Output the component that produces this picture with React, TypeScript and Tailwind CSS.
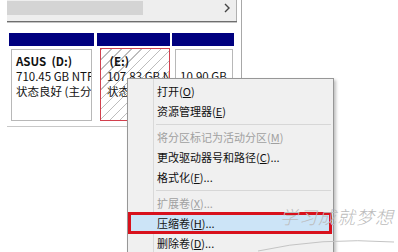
import React from "react";

const font = '"Noto Sans CJK SC", "Noto Sans", sans-serif';

function Item({ label, k, tail = "", disabled = false }: { label: string; k: string; tail?: string; disabled?: boolean }) {
  return (
    <div className={`h-[20px] leading-[20px] pl-[29px] whitespace-nowrap ${disabled ? "text-[#a0a0a0]" : "text-[#111111]"}`}>
      {label}(<span className="underline underline-offset-1">{k}</span>){tail}
    </div>
  );
}

function Sep() {
  return (
    <div className="h-[6px] flex items-center pl-[28px] pr-[2px]">
      <div className="h-px w-full bg-[#d7d7d7]" />
    </div>
  );
}

export default function App() {
  return (
    <div className="relative w-[398px] h-[252px] bg-white overflow-hidden flex text-[11px]" style={{ fontFamily: font }}>
      <div className="w-[7px] shrink-0" />
      <div className="w-[235px] h-full border-r border-[#a8a8a8] flex flex-col shrink-0">
        <div className="w-[230px] h-[21px] bg-[#eeeeee] border-r border-[#b0b0b0] flex items-start">
          <div className="w-[136px] h-[14px] mt-[1px] bg-[#d4d4d4]" />
          <div className="flex-1" />
          <svg width="8" height="10" viewBox="0 0 8 10" className="mt-[3px] mr-[5px]">
            <path d="M2 1 L6 5 L2 9" fill="none" stroke="#444" strokeWidth="1.4" />
          </svg>
        </div>
        <div className="w-[230px] h-px bg-[#6e6e6e]" />
        <div className="w-[230px] h-px bg-[#c4c4c4]" />
        <div className="mt-[10px] h-[94px] border-b border-[#c8c8c8] flex pl-[2px]">
          <div className="w-[85px] flex flex-col">
            <div className="h-[13px] bg-[#00007f]" />
            <div className="mt-[3px] mx-[2px] h-[72px] border border-[#b8b8b8] bg-white px-[4px] pt-[4px] leading-[15px] text-[11.5px] text-[#111] overflow-hidden whitespace-nowrap">
              <div className="font-bold">ASUS&nbsp; (D:)</div>
              <div>710.45 GB NTFS</div>
              <div>状态良好 (主分区)</div>
            </div>
          </div>
          <div className="w-[73px] ml-[3px] flex flex-col">
            <div className="h-[13px] bg-[#00007f]" />
            <div className="mt-[2px] ml-[3px] h-[73px] border border-[#d2404e] bg-[repeating-linear-gradient(135deg,#bdbdbd_0px,#bdbdbd_1px,#ffffff_1px,#ffffff_7px)] px-[6px] pt-[5px] leading-[15px] text-[11.5px] text-[#111] overflow-hidden whitespace-nowrap">
              <div className="font-bold">&nbsp;(E:)</div>
              <div>107.83 GB NTFS</div>
              <div>状态良好</div>
            </div>
          </div>
          <div className="w-[62px] ml-[2px] flex flex-col">
            <div className="h-[13px] bg-[#00007f]" />
            <div className="mt-[3px] ml-[3px] mr-[1px] h-[72px] border border-[#b8b8b8] bg-white px-[4px] pt-[4px] leading-[15px] text-[11.5px] text-[#111] overflow-hidden whitespace-nowrap">
              <div>&nbsp;</div>
              <div>10.90 GB</div>
            </div>
          </div>
        </div>
      </div>

      <div className="absolute left-[127px] top-[78px] w-[207px] h-[200px] bg-[#f0f0f0] border border-[#979797] shadow-[2px_2px_3px_rgba(0,0,0,0.25)] pt-[2px]">
        <div className="absolute left-[25px] top-0 bottom-0 w-px bg-[#d9d9d9]" />
        <div className="relative">
          <Item label="打开" k="O" />
          <Item label="资源管理器" k="E" />
          <Sep />
          <Item label="将分区标记为活动分区" k="M" disabled />
          <Item label="更改驱动器号和路径" k="C" tail="..." />
          <Item label="格式化" k="F" tail="..." />
          <Sep />
          <Item label="扩展卷" k="X" tail="..." disabled />
          <div className="relative bg-[#cce4f7]">
            <Item label="压缩卷" k="H" tail="..." />
            <div className="absolute left-0 right-[1px] top-[-1px] bottom-[-1px] border-[3px] border-[#d8111c]" />
          </div>
          <Item label="删除卷" k="D" tail="..." />
        </div>
      </div>

      <div className="absolute left-[280px] top-[204px] text-[18px] leading-[24px] text-[#bcbcbc] font-light italic tracking-[1px] whitespace-nowrap" style={{ fontFamily: font }}>
        学习成就梦想
      </div>
      <svg className="absolute left-0 top-0" width="398" height="252">
        <path d="M258 251 Q320 237 394 242" fill="none" stroke="#c4c4c4" strokeWidth="1" />
      </svg>
    </div>
  );
}
